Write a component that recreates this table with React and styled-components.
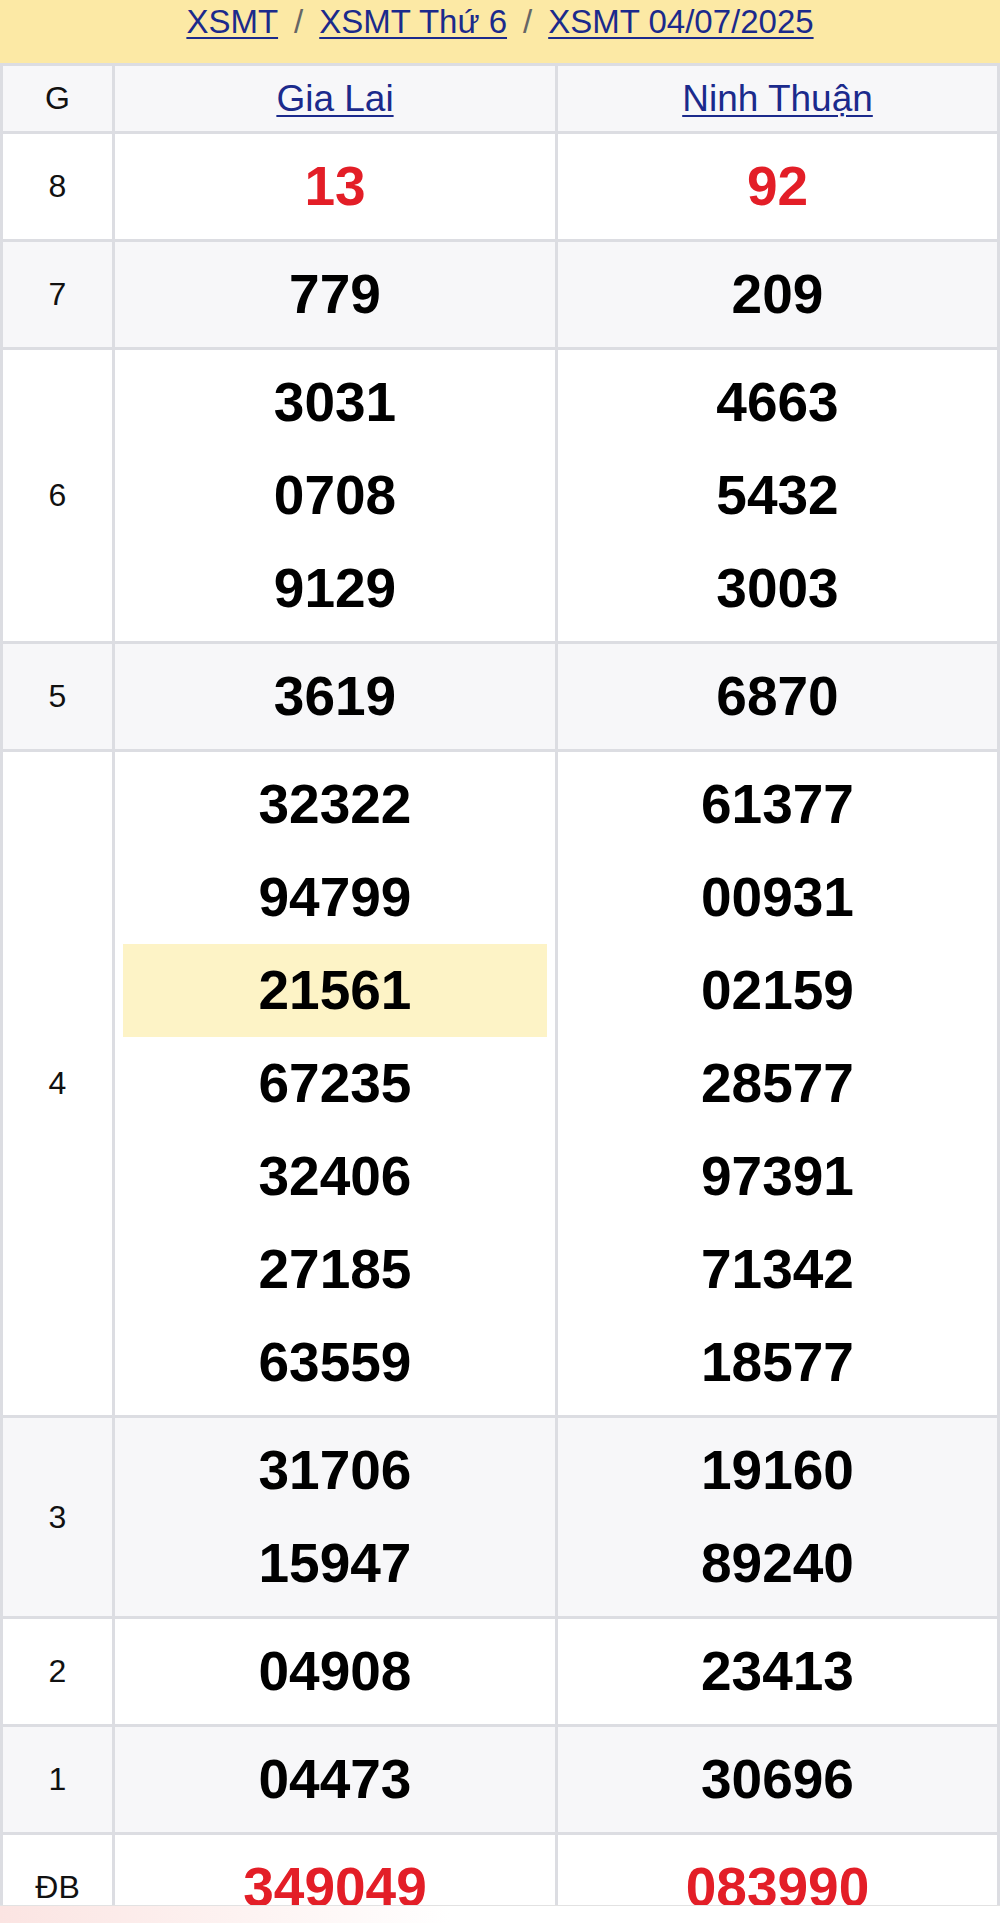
import styled, { createGlobalStyle } from "styled-components";

const GlobalStyle = createGlobalStyle`
  html, body {
    margin: 0;
    padding: 0;
    background: #fff;
    font-family: "Liberation Sans", Arial, sans-serif;
  }
`;

const Page = styled.div`
  width: 1000px;
`;

const Crumbs = styled.nav`
  display: flex;
  justify-content: center;
  align-items: flex-start;
  height: 63px;
  box-sizing: border-box;
  padding-top: 2px;
  background: #fce9a5;
  font-size: 33px;
  line-height: 40px;
`;

const Crumb = styled.a`
  color: #1b2a8c;
  text-decoration: underline;
  text-decoration-thickness: 2px;
  text-underline-offset: 4px;
`;

const Sep = styled.span`
  color: #666;
  margin: 0 16px;
`;

const Board = styled.div`
  display: grid;
  grid-template-columns: 109px 440px 1fr;
  gap: 3px;
  background: #dcdde2;
  border: 3px solid #dcdde2;
  border-bottom: none;
`;

const Label = styled.div`
  display: flex;
  align-items: center;
  justify-content: center;
  background: ${(p) => (p.$alt ? "#f7f7f9" : "#fff")};
  font-size: 32px;
  color: #111;
  min-height: 65px;
`;

const HeadCell = styled.div`
  display: flex;
  align-items: center;
  justify-content: center;
  height: 65px;
  background: #f7f7f9;
  font-size: 37px;
`;

const Province = styled.a`
  color: #1b2a8c;
  text-decoration: underline;
  text-decoration-thickness: 2px;
  text-underline-offset: 4px;
`;

const Cell = styled.div`
  padding: 6px 8px;
  background: ${(p) => (p.$alt ? "#f7f7f9" : "#fff")};
`;

const Num = styled.div`
  height: 93px;
  line-height: 93px;
  text-align: center;
  font-size: 55px;
  font-weight: 700;
  color: ${(p) => (p.$red ? "#e31e27" : "#000")};
  background: ${(p) => (p.$mark ? "#fdf3c6" : "transparent")};
`;

const Footer = styled.div`
  position: fixed;
  left: 0;
  right: 0;
  bottom: 0;
  height: 17px;
  border-top: 1px solid #e2e2e2;
  background: linear-gradient(90deg, #fbe4e2 0%, #fdf3f2 25%, #fff 45%);
`;

const rows = [
  { g: "8", a: ["13"], b: ["92"], red: true },
  { g: "7", a: ["779"], b: ["209"] },
  { g: "6", a: ["3031", "0708", "9129"], b: ["4663", "5432", "3003"] },
  { g: "5", a: ["3619"], b: ["6870"] },
  {
    g: "4",
    a: ["32322", "94799", "21561", "67235", "32406", "27185", "63559"],
    b: ["61377", "00931", "02159", "28577", "97391", "71342", "18577"],
    markA: 2,
  },
  { g: "3", a: ["31706", "15947"], b: ["19160", "89240"] },
  { g: "2", a: ["04908"], b: ["23413"] },
  { g: "1", a: ["04473"], b: ["30696"] },
  { g: "ĐB", a: ["349049"], b: ["083990"], red: true },
];

const App = () => {
  return (
    <Page>
      <GlobalStyle />
      <Crumbs>
        <Crumb href="#">XSMT</Crumb>
        <Sep>/</Sep>
        <Crumb href="#">XSMT Thứ 6</Crumb>
        <Sep>/</Sep>
        <Crumb href="#">XSMT 04/07/2025</Crumb>
      </Crumbs>
      <Board>
        <Label $alt>G</Label>
        <HeadCell>
          <Province href="#">Gia Lai</Province>
        </HeadCell>
        <HeadCell>
          <Province href="#">Ninh Thuận</Province>
        </HeadCell>
        {rows.map((r, i) => {
          const alt = i % 2 === 1;
          return [
            <Label key={r.g + "l"} $alt={alt}>
              {r.g}
            </Label>,
            <Cell key={r.g + "a"} $alt={alt}>
              {r.a.map((n, j) => (
                <Num key={j} $red={r.red} $mark={r.markA === j}>
                  {n}
                </Num>
              ))}
            </Cell>,
            <Cell key={r.g + "b"} $alt={alt}>
              {r.b.map((n, j) => (
                <Num key={j} $red={r.red}>
                  {n}
                </Num>
              ))}
            </Cell>,
          ];
        })}
      </Board>
      <Footer />
    </Page>
  );
};

export default App;
